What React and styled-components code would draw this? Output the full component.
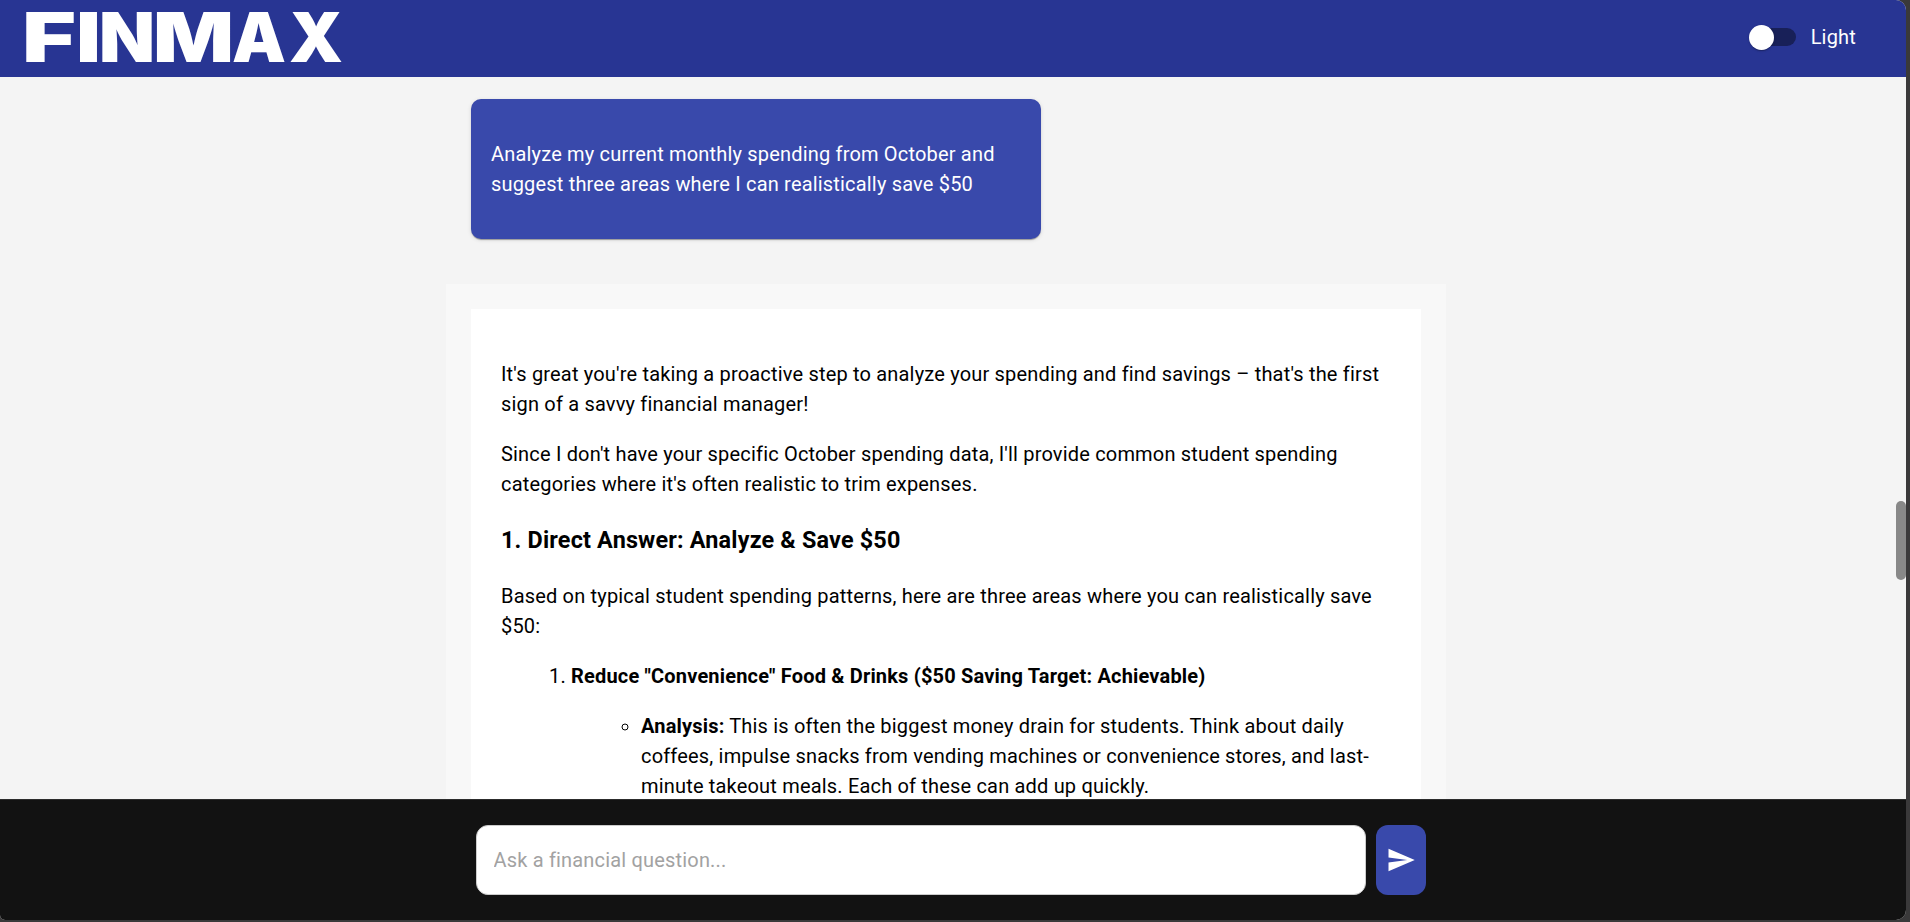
import { useState } from 'react';
import styled, { createGlobalStyle } from 'styled-components';
import { MdSend } from 'react-icons/md';

const GlobalStyle = createGlobalStyle`
* {
  box-sizing: border-box;
}
body {
  margin: 0;
  background: #3a393a;
  font-family: Roboto, 'Liberation Sans', sans-serif;
  overflow: hidden;
}
`

const Page = styled.div`
display: flex;
flex-direction: column;
width: 1906px;
height: 920px;
background: #f4f4f4;
border-radius: 0 10px 10px 5px;
overflow: hidden;
font-size: 20px;
line-height: 30px;
letter-spacing: 0.18px;
color: #000;
`

const Header = styled.header`
display: flex;
flex: none;
align-items: center;
justify-content: space-between;
height: 77px;
padding: 0 50px 3px 26px;
background: #283593;
`

const Logo = styled.svg`
display: block;
width: 316px;
height: 50px;
overflow: visible;
fill: #fff;
font-family: Inter, Roboto, sans-serif;
font-size: 68.8px;
font-weight: 900;
letter-spacing: 0;
`

const ThemeToggle = styled.div`
display: flex;
align-items: center;
gap: 15px;
color: #fff;
cursor: pointer;
`

const Track = styled.div`
display: flex;
align-items: center;
justify-content: ${(props) => (props.$on ? 'flex-end' : 'flex-start')};
width: 42px;
height: 18px;
margin-left: 5px;
border-radius: 9px;
background: #182058;
`

const Thumb = styled.div`
flex: none;
width: 25px;
height: 25px;
margin-left: -5px;
border-radius: 50%;
background: #fff;
box-shadow: 0 2px 1px -1px rgba(0, 0, 0, 0.2), 0 1px 3px rgba(0, 0, 0, 0.14);
`

const Body = styled.div`
display: flex;
flex: 1;
min-height: 0;
`

const Chat = styled.main`
flex: 1;
padding: 22px 450px 0 446px;
overflow: hidden;
`

const Question = styled.div`
width: 570px;
margin-left: 25px;
padding: 20px;
border-radius: 10px;
background: #3949ab;
color: #fff;
box-shadow: 0 2px 1px -1px rgba(0, 0, 0, 0.2), 0 1px 1px rgba(0, 0, 0, 0.14), 0 1px 4px rgba(0, 0, 0, 0.12);
`

const Text = styled.p`
margin: 20px 0;
`

const AnswerFrame = styled.div`
margin-top: 45px;
padding: 25px;
background: #f8f8f8;
`

const Answer = styled.article`
padding: 30px;
background: #fff;
`

const Heading = styled.h3`
margin: 24px 0 23px;
font-size: 23.4px;
line-height: 35px;
letter-spacing: 0.18px;
`

const NumberList = styled.ol`
margin: 20px 0;
padding-left: 70px;
`

const BulletList = styled.ul`
margin: 20px 0;
padding-left: 70px;
list-style: circle;
`

const ScrollBar = styled.div`
width: 10px;
padding-top: 424px;
`

const ScrollThumb = styled.div`
height: 79px;
border-radius: 5px;
background: #888;
`

const Footer = styled.footer`
display: flex;
flex: none;
justify-content: center;
gap: 10px;
height: 121px;
padding: 25px 4px 0 0;
border-top: 1px solid #2c2c2c;
background: #121212;
`

const Input = styled.input`
width: 890px;
height: 70px;
padding: 0 17px 0 16.5px;
border: 1px solid #ccc;
border-radius: 12px;
outline: none;
background: #fff;
font-family: inherit;
font-size: 20px;
letter-spacing: inherit;
&::placeholder {
  color: #a2a2a2;
  opacity: 1;
}
`

const SendButton = styled.button`
display: flex;
align-items: center;
justify-content: center;
width: 50px;
height: 70px;
padding: 0;
border: none;
border-radius: 12px;
background: #3949ab;
color: #fff;
cursor: pointer;
`

// start and width of every letter in the wordmark
const letters = [
    { char: 'F', x: -4, width: 54 },
    { char: 'I', x: 50, width: 25 },
    { char: 'N', x: 73, width: 56 },
    { char: 'M', x: 127, width: 81 },
    { char: 'A', x: 206, width: 54 },
    { char: 'X', x: 263, width: 54 },
];

const App = () => {

    // Dark or light mode
    const [dark, setDark] = useState(false);

    // Question being typed
    const [question, setQuestion] = useState('');

    return (
        <>
            <GlobalStyle />
            <Page>
                <Header>
                    <Logo viewBox="0 0 316 50">
                        <text y="50">
                            {letters.map((l) => (
                                <tspan key={l.char} x={l.x} textLength={l.width} lengthAdjust="spacingAndGlyphs">{l.char}</tspan>
                            ))}
                        </text>
                    </Logo>
                    <ThemeToggle onClick={() => setDark(!dark)}>
                        <Track $on={dark}><Thumb /></Track>
                        {dark ? 'Dark' : 'Light'}
                    </ThemeToggle>
                </Header>
                <Body>
                    <Chat>
                        <Question>
                            <Text>Analyze my current monthly spending from October and suggest three areas where I can realistically save $50</Text>
                        </Question>
                        <AnswerFrame>
                            <Answer>
                                <Text>It's great you're taking a proactive step to analyze your spending and find savings – that's the first sign of a savvy financial manager!</Text>
                                <Text>Since I don't have your specific October spending data, I'll provide common student spending categories where it's often realistic to trim expenses.</Text>
                                <Heading>1. Direct Answer: Analyze &amp; Save $50</Heading>
                                <Text>Based on typical student spending patterns, here are three areas where you can realistically save $50:</Text>
                                <NumberList>
                                    <li>
                                        <strong>Reduce "Convenience" Food &amp; Drinks ($50 Saving Target: Achievable)</strong>
                                        <BulletList>
                                            <li>
                                                <strong>Analysis:</strong> This is often the biggest money drain for students. Think about daily coffees, impulse snacks from vending machines or convenience stores, and last-minute takeout meals. Each of these can add up quickly.
                                            </li>
                                        </BulletList>
                                    </li>
                                </NumberList>
                            </Answer>
                        </AnswerFrame>
                    </Chat>
                    <ScrollBar><ScrollThumb /></ScrollBar>
                </Body>
                <Footer>
                    <Input
                        type="text"
                        placeholder="Ask a financial question..."
                        value={question}
                        onChange={(e) => setQuestion(e.target.value)}
                    />
                    <SendButton><MdSend size={30} /></SendButton>
                </Footer>
            </Page>
        </>
    );
}
export default App;
